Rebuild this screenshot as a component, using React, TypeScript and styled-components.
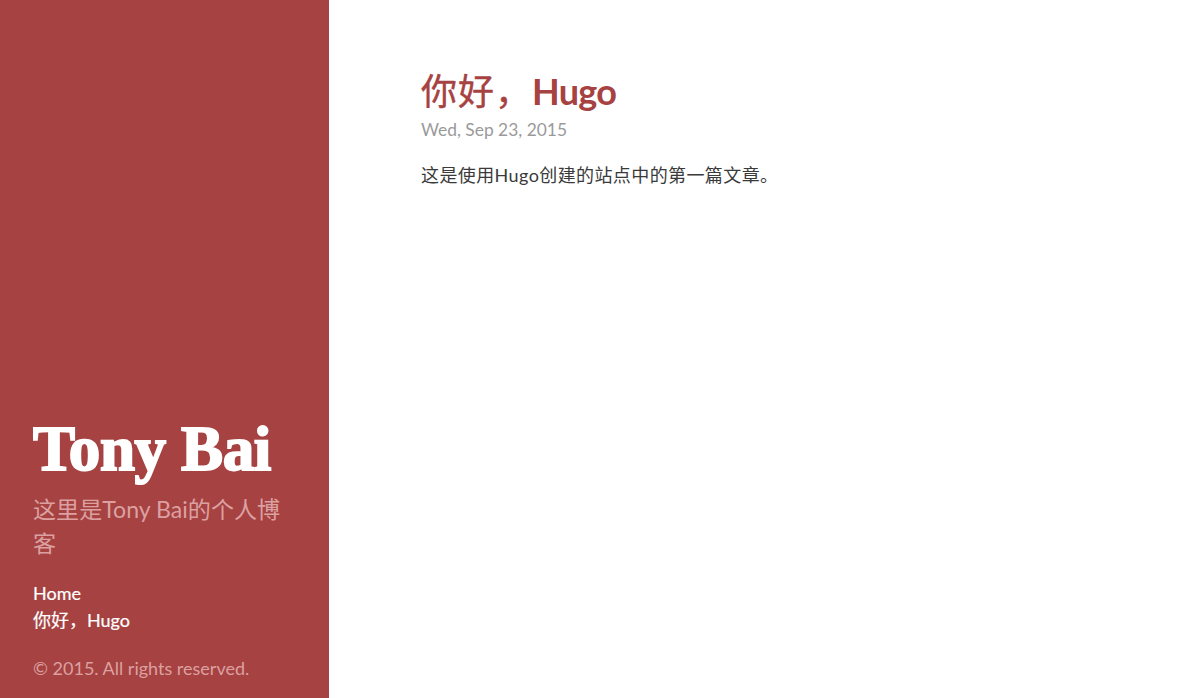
import React from "react";
import styled, { createGlobalStyle } from "styled-components";

const GlobalStyle = createGlobalStyle`
  html, body {
    margin: 0;
    padding: 0;
    height: 100%;
    background: #fff;
  }
  body {
    font-family: Lato, "Noto Sans CJK SC", sans-serif;
    font-size: 18px;
    line-height: 1.5;
    color: #313131;
  }
`;

const Page = styled.div`
  display: flex;
  height: 698px;
  overflow: hidden;
`;

const Sidebar = styled.aside`
  box-sizing: border-box;
  width: 329px;
  flex-shrink: 0;
  height: 100%;
  padding: 0 33px 17px;
  background: #a64242;
  display: flex;
  flex-direction: column;
  justify-content: flex-end;
`;

const SiteTitle = styled.h1`
  margin: 0 0 5px;
  font-family: "Liberation Serif", "DejaVu Serif", serif;
  font-weight: 700;
  font-size: 63px;
  line-height: 76px;
  letter-spacing: -0.4px;
  color: #fff;
  -webkit-text-stroke: 2px #fff;
`;

const Lead = styled.p`
  margin: 0 0 20px;
  font-size: 23.1px;
  line-height: 34px;
  font-weight: 400;
  color: #dca0a0;
`;

const Nav = styled.nav`
  display: flex;
  flex-direction: column;
  margin-bottom: 21px;
`;

const NavLink = styled.a`
  font-size: 18px;
  line-height: 27px;
  color: #fff;
  text-decoration: none;
  -webkit-text-stroke: 0.2px #fff;
`;

const Copy = styled.p`
  margin: 0;
  font-size: 18px;
  line-height: 26px;
  color: #dca0a0;
`;

const Content = styled.main`
  flex: 1;
  padding: 64px 92px 0;
`;

const PostTitle = styled.h1`
  margin: 0;
  font-size: 36px;
  line-height: 54px;
  font-weight: 700;
  letter-spacing: -0.7px;
  color: #a64242;
`;

const TitleCjk = styled.span`
  font-weight: 400;
  letter-spacing: 1px;
  -webkit-text-stroke: 0.4px #a64242;
`;

const PostDate = styled.div`
  font-size: 17.4px;
  line-height: 24px;
  color: #9a9a9a;
  margin-bottom: 20px;
`;

const PostBody = styled.p`
  margin: 0;
  font-size: 18px;
  line-height: 26px;
  letter-spacing: 0.4px;
  color: #3a3a3a;
`;

export default function App() {
  return (
    <>
      <GlobalStyle />
      <Page>
        <Sidebar>
          <SiteTitle>Tony Bai</SiteTitle>
          <Lead>这里是Tony Bai的个人博客</Lead>
          <Nav>
            <NavLink href="#">Home</NavLink>
            <NavLink href="#">你好，Hugo</NavLink>
          </Nav>
          <Copy>© 2015. All rights reserved.</Copy>
        </Sidebar>
        <Content>
          <PostTitle>
            <TitleCjk>你好，</TitleCjk>Hugo
          </PostTitle>
          <PostDate>Wed, Sep 23, 2015</PostDate>
          <PostBody>这是使用Hugo创建的站点中的第一篇文章。</PostBody>
        </Content>
      </Page>
    </>
  );
}
